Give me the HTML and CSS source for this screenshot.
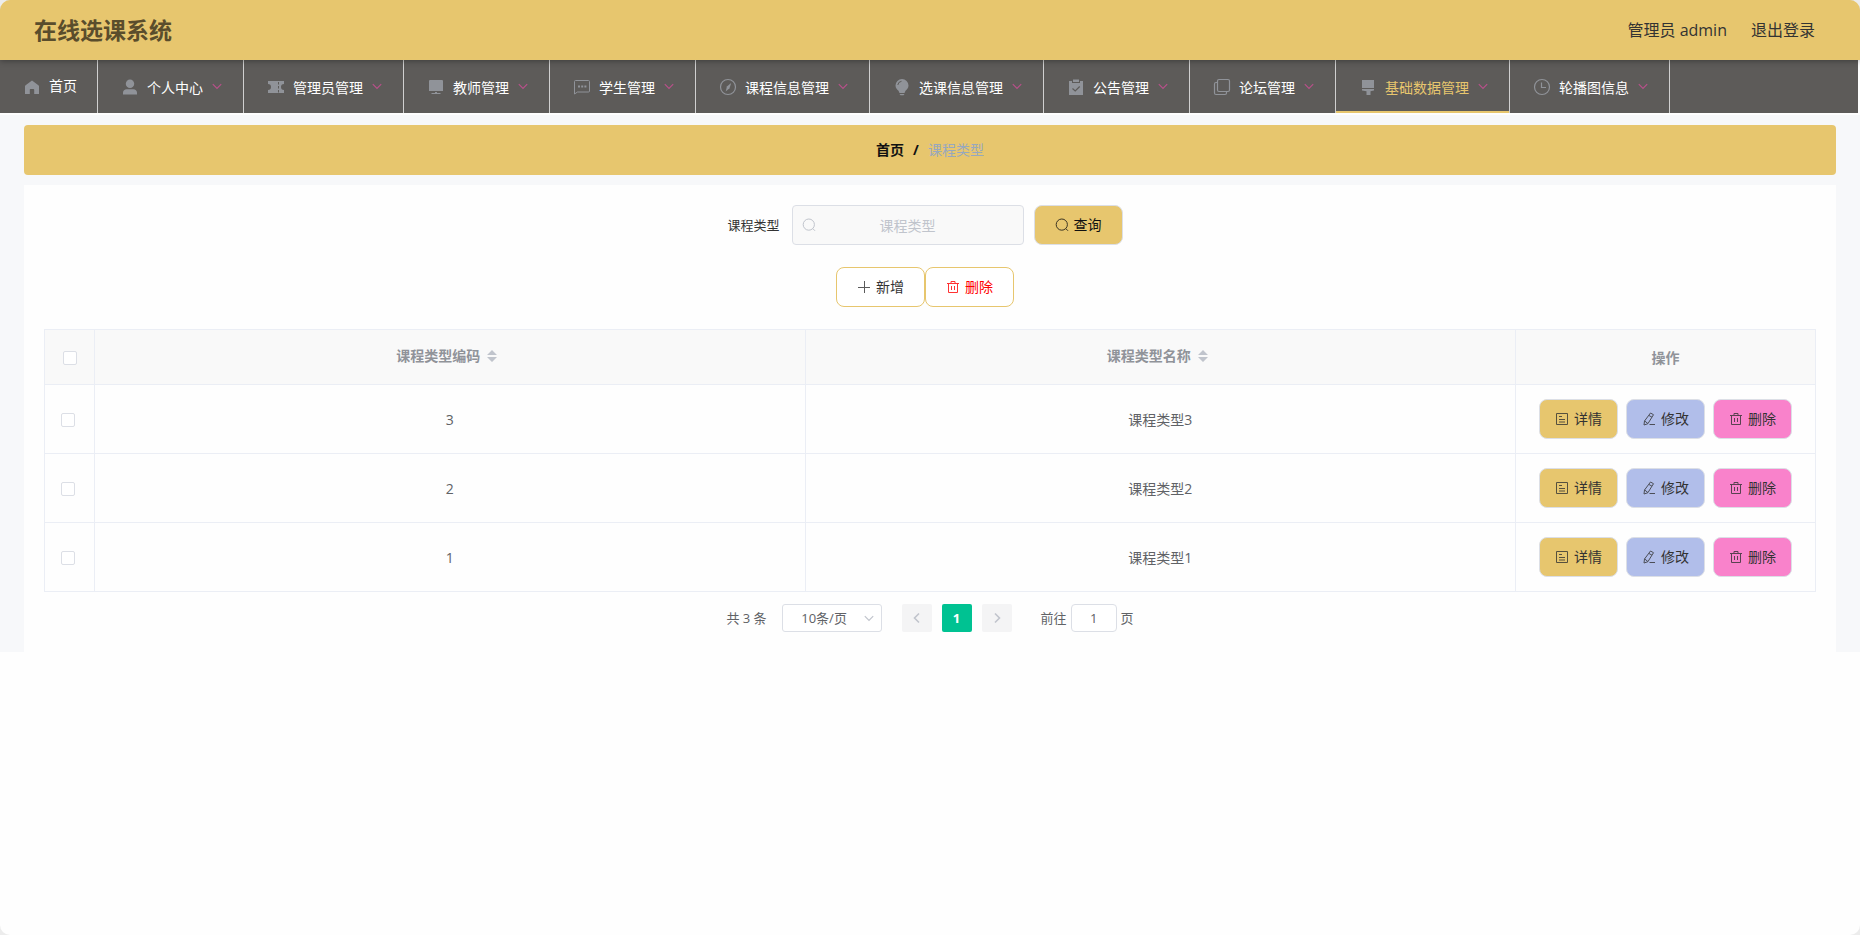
FILE: index.html
```html
<!DOCTYPE html>
<html lang="zh-CN">
<head>
<meta charset="utf-8">
<title>在线选课系统</title>
<link rel="stylesheet" href="styles.css">
</head>
<body>
<svg class="sprite" aria-hidden="true">
  <symbol id="i-down" viewBox="0 0 12 12"><path d="M1.8 3.200l4.200 4.200L10.200 3.200" fill="none" stroke="currentColor" stroke-width="1.200"/></symbol>
  <symbol id="i-search" viewBox="0 0 14 14"><g fill="none" stroke="currentColor"><circle cx="6.800" cy="6.600" r="5.600"/><path d="M10.800 10.600l2.200 2.200"/></g></symbol>
  <symbol id="i-trash" viewBox="0 0 14 14"><path d="M1 3.500h12M5 3.200V1.500h4v1.700M2.500 3.500v9h9v-9M5.500 6v4M8.500 6v4" fill="none" stroke="currentColor"/></symbol>
  <symbol id="i-doc" viewBox="0 0 14 14"><path d="M1.500 1.500h11v11h-11zM4 4.500h3M4 7.500h6M4 10h6" fill="none" stroke="currentColor"/></symbol>
  <symbol id="i-edit" viewBox="0 0 14 14"><path d="M8.500 1l3 1.700-5.600 9-3.900 1.300.5-4zM7 3.500l3 1.700M2.700 9l3.200 2.500M7.500 12.500H13" fill="none" stroke="currentColor"/></symbol>
</svg>
<div class="app">
  <header class="top">
    <h1 class="title">在线选课系统</h1>
    <div class="account"><span>管理员 admin</span><a href="#">退出登录</a></div>
  </header>

  <nav class="menu">
    <a class="item home" href="#">
      <svg class="icon" viewBox="0 0 18 18"><path d="M9 2.500L2.600 7.200Q2 7.700 2 8.400V16h4.800v-4.200q0-.8.8-.8h2.800q.8 0 .8.800V16H16V8.400q0-.7-.6-1.200z" fill="currentColor"/></svg>
      <span>首页</span>
    </a>
    <button class="item" type="button">
      <svg class="icon" viewBox="0 0 18 18"><g fill="currentColor"><ellipse cx="9" cy="5.800" rx="4.200" ry="4.300"/><path d="M2 16.600v-1.800c0-2.400 1.600-3.600 3.600-3.600h6.800c2 0 3.600 1.200 3.600 3.600v1.800z"/></g></svg>
      <span>个人中心</span><svg class="arrow"><use href="#i-down"/></svg>
    </button>
    <button class="item" type="button">
      <svg class="icon" viewBox="0 0 18 18"><path d="M1 3h16v3a3 3 0 0 0 0 6v3H1v-3a3 3 0 0 0 0-6z" fill="currentColor"/><path d="M11.500 4v2.500M11.500 8v2.500M11.500 12v2.500" stroke="#5d5b59"/></svg>
      <span>管理员管理</span><svg class="arrow"><use href="#i-down"/></svg>
    </button>
    <button class="item" type="button">
      <svg class="icon" viewBox="0 0 18 18"><path d="M3 2h12a1 1 0 0 1 1 1v10H2V3a1 1 0 0 1 1-1zM8 14h2v1h3.500v1h-9v-1H8z" fill="currentColor"/></svg>
      <span>教师管理</span><svg class="arrow"><use href="#i-down"/></svg>
    </button>
    <button class="item" type="button">
      <svg class="icon" viewBox="0 0 18 18"><path d="M1.500 16V3.500a1 1 0 0 1 1-1h13a1 1 0 0 1 1 1v9.500a1 1 0 0 1-1 1H4.500z" fill="none" stroke="currentColor"/><path d="M5 7.500h2v2H5zM8.200 7.500h2v2h-2zM11.400 7.500h2v2h-2z" fill="currentColor"/></svg>
      <span>学生管理</span><svg class="arrow"><use href="#i-down"/></svg>
    </button>
    <button class="item" type="button">
      <svg class="icon" viewBox="0 0 18 18"><circle cx="9" cy="9" r="7.500" fill="none" stroke="currentColor" stroke-width="1.200"/><path d="M12.200 5l-1.700 5.200-3.800 3.200 1.200-5z" fill="currentColor"/></svg>
      <span>课程信息管理</span><svg class="arrow"><use href="#i-down"/></svg>
    </button>
    <button class="item" type="button">
      <svg class="icon" viewBox="0 0 18 18"><path d="M9 1a6.500 6.500 0 0 1 6.500 6.500c0 2.500-1.500 4-3 5.300L11.500 15h-5l-1-2.200c-1.500-1.300-3-2.800-3-5.300A6.500 6.500 0 0 1 9 1zM6.500 16h5l-1 1.200h-3z" fill="currentColor"/><path d="M4.800 7A4.200 4.200 0 0 1 8.500 3.300" fill="none" stroke="#5d5b59"/></svg>
      <span>选课信息管理</span><svg class="arrow"><use href="#i-down"/></svg>
    </button>
    <button class="item" type="button">
      <svg class="icon" viewBox="0 0 18 18"><path d="M2 3h3v2h8V3h3v14H2zM6 1.500h6V4H6z" fill="currentColor"/><path d="M5.500 10.500l2.700 2.500 4.500-4.500" fill="none" stroke="#5d5b59" stroke-width="1.200"/></svg>
      <span>公告管理</span><svg class="arrow"><use href="#i-down"/></svg>
    </button>
    <button class="item" type="button">
      <svg class="icon" viewBox="0 0 18 18"><g fill="none" stroke="currentColor" stroke-width="1.200"><rect x="4.500" y="1.500" width="12" height="12" rx="1.500"/><path d="M4.500 4.500h-1.500a1.500 1.500 0 0 0-1.500 1.500v9A1.500 1.500 0 0 0 3 16.500h9a1.500 1.500 0 0 0 1.500-1.500v-1.500"/></g></svg>
      <span>论坛管理</span><svg class="arrow"><use href="#i-down"/></svg>
    </button>
    <button class="item active" type="button">
      <svg class="icon" viewBox="0 0 18 18"><path d="M3 2h12v8H3zM3 11h12v1.500l-3.500.8V17H7.500v-3.700L3 12.500z" fill="currentColor"/></svg>
      <span>基础数据管理</span><svg class="arrow"><use href="#i-down"/></svg>
    </button>
    <button class="item" type="button">
      <svg class="icon" viewBox="0 0 18 18"><g fill="none" stroke="currentColor" stroke-width="1.200"><circle cx="9" cy="9" r="7.500"/><path d="M8.500 4.500v5H13"/></g></svg>
      <span>轮播图信息</span><svg class="arrow"><use href="#i-down"/></svg>
    </button>
  </nav>

  <div class="page">
    <nav class="crumbs"><a href="#">首页</a><span class="slash">/</span><span class="here">课程类型</span></nav>

    <main class="card">
      <form class="search">
        <label for="type">课程类型</label>
        <span class="field"><svg class="lens"><use href="#i-search"/></svg><input id="type" type="text" placeholder="课程类型"></span>
        <button class="btn gold" type="button"><svg class="glyph"><use href="#i-search"/></svg>查询</button>
      </form>

      <div class="actions">
        <button class="btn outline" type="button"><svg class="glyph" viewBox="0 0 14 14"><path d="M7.500 1v12M1 7.500h12" stroke="currentColor"/></svg>新增</button>
        <button class="btn outline danger" type="button"><svg class="glyph"><use href="#i-trash"/></svg>删除</button>
      </div>

      <table class="grid">
        <colgroup><col class="c-check"><col><col><col class="c-ops"></colgroup>
        <thead>
          <tr>
            <th class="pick"><input type="checkbox" aria-label="全选"></th>
            <th><span class="sortable">课程类型编码<svg class="sort" viewBox="0 0 10 12"><path d="M5 0l5 5H0zM0 7h10l-5 5z" fill="currentColor"/></svg></span></th>
            <th><span class="sortable">课程类型名称<svg class="sort" viewBox="0 0 10 12"><path d="M5 0l5 5H0zM0 7h10l-5 5z" fill="currentColor"/></svg></span></th>
            <th>操作</th>
          </tr>
        </thead>
        <tbody>
          <tr>
            <td class="pick"><input type="checkbox" aria-label="选择 3"></td><td>3</td><td>课程类型3</td>
            <td class="tools"><div class="ops">
              <button class="btn small gold" type="button"><svg class="glyph"><use href="#i-doc"/></svg>详情</button>
              <button class="btn small blue" type="button"><svg class="glyph"><use href="#i-edit"/></svg>修改</button>
              <button class="btn small pink" type="button"><svg class="glyph"><use href="#i-trash"/></svg>删除</button>
            </div></td>
          </tr>
          <tr>
            <td class="pick"><input type="checkbox" aria-label="选择 2"></td><td>2</td><td>课程类型2</td>
            <td class="tools"><div class="ops">
              <button class="btn small gold" type="button"><svg class="glyph"><use href="#i-doc"/></svg>详情</button>
              <button class="btn small blue" type="button"><svg class="glyph"><use href="#i-edit"/></svg>修改</button>
              <button class="btn small pink" type="button"><svg class="glyph"><use href="#i-trash"/></svg>删除</button>
            </div></td>
          </tr>
          <tr>
            <td class="pick"><input type="checkbox" aria-label="选择 1"></td><td>1</td><td>课程类型1</td>
            <td class="tools"><div class="ops">
              <button class="btn small gold" type="button"><svg class="glyph"><use href="#i-doc"/></svg>详情</button>
              <button class="btn small blue" type="button"><svg class="glyph"><use href="#i-edit"/></svg>修改</button>
              <button class="btn small pink" type="button"><svg class="glyph"><use href="#i-trash"/></svg>删除</button>
            </div></td>
          </tr>
        </tbody>
      </table>

      <div class="pager">
        <span>共 3 条</span>
        <span class="size"><select aria-label="每页条数"><option>10条/页</option></select><svg class="caret"><use href="#i-down"/></svg></span>
        <div class="pages">
          <button type="button" aria-label="上一页" disabled><svg viewBox="0 0 12 12"><path d="M8 1.500L3.500 6 8 10.500" fill="none" stroke="currentColor" stroke-width="1.600"/></svg></button>
          <button class="current" type="button">1</button>
          <button type="button" aria-label="下一页" disabled><svg viewBox="0 0 12 12"><path d="M4 1.500L8.500 6 4 10.500" fill="none" stroke="currentColor" stroke-width="1.600"/></svg></button>
        </div>
        <label class="jump">前往<input type="text" value="1">页</label>
      </div>
    </main>
  </div>
</div>
</body>
</html>
```
FILE: styles.css
```css
* { box-sizing: border-box; }

body {
  margin: 0;
  background: #ececec;
  font-family: "Open Sans", "Noto Sans CJK SC", sans-serif;
  font-size: 14px;
  line-height: 20px;
  color: #333;
}

button, input, select { font: inherit; color: inherit; margin: 0; }
button { cursor: pointer; }
a { color: inherit; text-decoration: none; }
.sprite { display: none; }

.app {
  min-height: 100vh;
  background: #fefefe;
  border-radius: 10px;
  overflow: hidden;
}

/* header */
.top {
  position: relative;
  display: flex;
  align-items: center;
  justify-content: space-between;
  height: 60px;
  padding: 0 45px 0 34px;
  background: #e7c66e;
  box-shadow: 0 1px 6px rgba(0, 0, 0, .35);
}
.title { margin: 0; font-size: 23px; line-height: 32px; color: #5a4d2c; }
.account { display: flex; gap: 24px; font-size: 16px; line-height: 24px; }

/* main menu */
.menu {
  display: flex;
  height: 53px;
  margin-right: 2px;
  background: #5d5b59;
}
.item {
  display: flex;
  align-items: center;
  padding: 0 20px;
  border: 0;
  border-right: 1px solid #d0d0d0;
  background: none;
  color: #fff;
  white-space: nowrap;
}
.item span { padding-top: 2px; }
.item.home span { padding: 0 0 2px; }
.item.active { color: #e7c66e; box-shadow: inset 0 -2px #e7c66e; }
.icon { width: 18px; height: 18px; margin: 0 8px 0 3px; color: #909399; }
.arrow { width: 12px; height: 12px; margin-left: 8px; color: #b8508a; }

/* page */
.page { margin-top: 2px; padding: 10px 24px 0; background: #f7f8fa; }
.crumbs {
  display: flex;
  align-items: center;
  justify-content: center;
  height: 50px;
  border-radius: 4px;
  background: #e7c66e;
  color: #111;
  font-weight: 700;
}
.slash { margin: 0 9px; }
.here { color: #97a8be; font-weight: 400; }

.card { margin-top: 10px; padding: 20px; background: #fefefe; }

.search, .actions { display: flex; justify-content: center; align-items: center; padding-right: 10px; }
.search label { margin-right: 12px; font-size: 13px; }
.field { position: relative; width: 232px; margin-right: 10px; }
.field input {
  display: block;
  width: 100%;
  height: 40px;
  padding: 0 30px;
  border: 1px solid #dcdfe6;
  border-radius: 4px;
  background: #f9f9f9;
  text-align: center;
}
.field input::placeholder { color: #c0c4cc; }
.lens { position: absolute; left: 10px; top: 13px; width: 14px; height: 14px; color: #c0c4cc; }

.btn {
  display: flex;
  align-items: center;
  gap: 5px;
  height: 40px;
  padding: 0 20px;
  border: 1px solid #dcdfe6;
  border-radius: 8px;
  white-space: nowrap;
}
.glyph { width: 14px; height: 14px; opacity: .8; }
.small { padding: 0 15px; }
.gold { background: #e7c66e; }
.search .gold { color: #111; }
.blue { background: #b1beea; }
.pink { background: #f982cb; }
.outline { background: #fff; border-color: #e7c66e; }
.danger { color: #f00; }
.actions { margin: 22px 0; }

/* data table */
.grid {
  width: 100%;
  table-layout: fixed;
  border-collapse: collapse;
  color: #606266;
  text-align: center;
}
.c-check { width: 50px; }
.c-ops { width: 300px; }
.grid th, .grid td { padding: 2px 0 0; border: 1px solid #ebeef5; }
.grid th { height: 55px; background: #f9f9f9; color: #909399; font-weight: 700; }
.grid td { height: 69px; }
.grid .tools { padding: 0; }
.grid .pick input {
  display: block;
  appearance: none;
  width: 14px;
  height: 14px;
  margin: 0 auto;
  border: 1px solid #dcdfe6;
  border-radius: 2px;
  background: #fff;
}
.grid td.pick { padding-right: 4px; }
.sortable { display: flex; align-items: center; justify-content: center; padding: 0 6px 4px 0; }
.sort { width: 10px; height: 12px; margin-left: 7px; color: #c0c4cc; }
.ops { display: flex; justify-content: center; gap: 8px; color: #333; }

/* pagination */
.pager {
  display: flex;
  align-items: center;
  justify-content: center;
  margin-top: 12px;
  font-size: 13px;
  line-height: 28px;
  color: #606266;
}
.size { position: relative; width: 100px; height: 28px; margin: 0 20px 0 15px; }
.size select {
  display: block;
  appearance: none;
  width: 100%;
  height: 28px;
  padding: 0 25px 0 10px;
  border: 1px solid #dcdfe6;
  border-radius: 3px;
  background: #fff;
  line-height: 20px;
  text-align: center;
  text-align-last: center;
}
.caret { position: absolute; right: 7px; top: 9px; width: 12px; height: 12px; color: #c0c4cc; pointer-events: none; }
.pages { display: flex; gap: 10px; margin-right: 29px; }
.pages button {
  display: flex;
  align-items: center;
  justify-content: center;
  width: 30px;
  height: 28px;
  padding: 0;
  border: 0;
  border-radius: 2px;
  background: #f4f4f5;
  color: #c0c4cc;
  font-weight: 700;
}
.pages svg { width: 12px; height: 12px; }
.pages .current { background: #00c292; color: #fff; }
.jump { display: flex; align-items: center; gap: 4px; }
.jump input {
  width: 46px;
  height: 28px;
  padding: 0;
  border: 1px solid #dcdfe6;
  border-radius: 4px;
  background: #fff;
  text-align: center;
}
```
